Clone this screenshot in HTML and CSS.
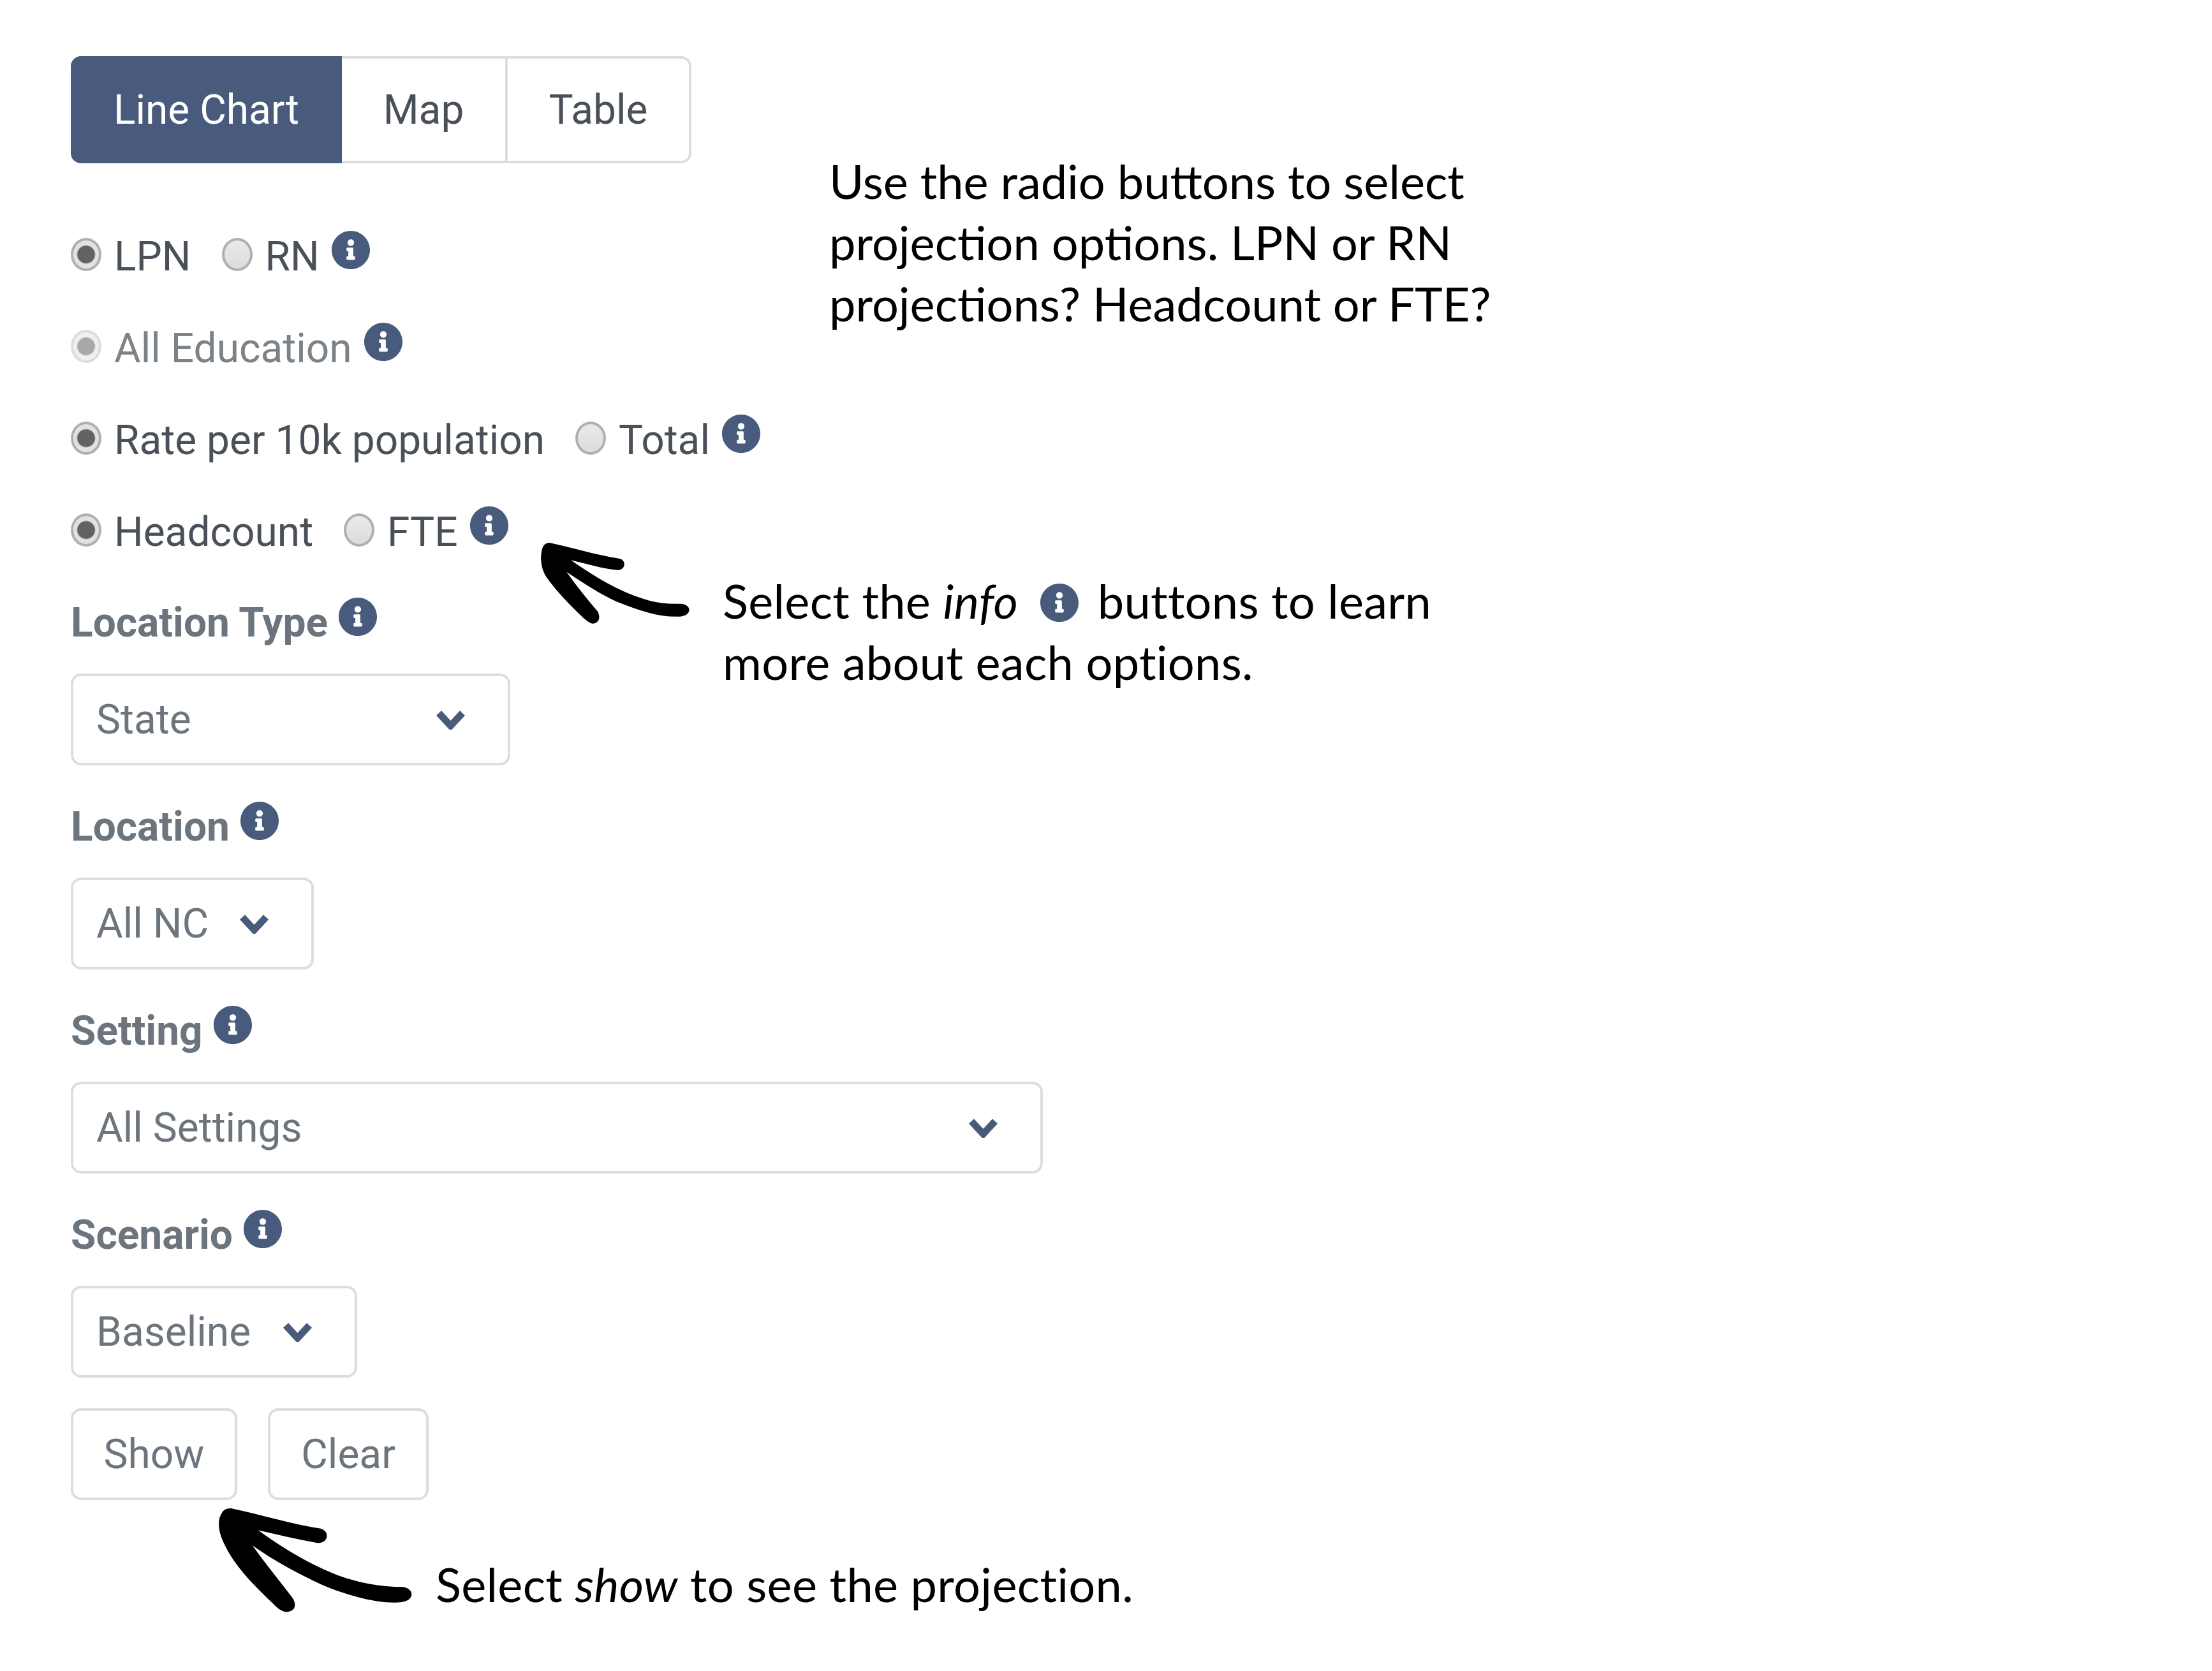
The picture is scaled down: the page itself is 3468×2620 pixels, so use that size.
FILE: index.html

```html
<!DOCTYPE html>
<html lang="en">
<head>
  <meta charset="UTF-8">
  <title>Projection options</title>
  <link rel="stylesheet" href="styles.css">
</head>
<body>
  <svg class="sprites" width="0" height="0">
    <symbol id="info" viewBox="0 0 512 512">
      <path d="M256 8C119.043 8 8 119.083 8 256c0 136.997 111.043 248 248 248s248-111.003 248-248C504 119.083 392.957 8 256 8zm0 110c23.196 0 42 18.804 42 42s-18.804 42-42 42-42-18.804-42-42 18.804-42 42-42zm56 254c0 6.627-5.373 12-12 12h-88c-6.627 0-12-5.373-12-12v-24c0-6.627 5.373-12 12-12h12v-64h-12c-6.627 0-12-5.373-12-12v-24c0-6.627 5.373-12 12-12h64c6.627 0 12 5.373 12 12v100h12c6.627 0 12 5.373 12 12v24z"/>
    </symbol>
    <symbol id="chevron" viewBox="0 0 47 31">
      <path d="M5 5 L23.5 25 L42 5" fill="none" stroke="currentColor" stroke-width="11"/>
    </symbol>
  </svg>

  <main class="page">
    <div class="tabs">
      <button class="tab tab-line active">Line Chart</button>
      <button class="tab tab-map">Map</button>
      <button class="tab tab-table">Table</button>
    </div>

    <form class="filters">
      <div class="radio-row">
        <label class="radio"><input type="radio" name="type" checked>LPN</label>
        <label class="radio"><input type="radio" name="type">RN</label>
        <svg class="info"><use href="#info"/></svg>
      </div>
      <div class="radio-row">
        <label class="radio disabled"><input type="radio" name="edu" checked disabled>All Education</label>
        <svg class="info"><use href="#info"/></svg>
      </div>
      <div class="radio-row">
        <label class="radio"><input type="radio" name="rate" checked>Rate per 10k population</label>
        <label class="radio"><input type="radio" name="rate">Total</label>
        <svg class="info"><use href="#info"/></svg>
      </div>
      <div class="radio-row">
        <label class="radio"><input type="radio" name="count" checked>Headcount</label>
        <label class="radio"><input type="radio" name="count">FTE</label>
        <svg class="info"><use href="#info"/></svg>
      </div>

      <div class="field-label">Location Type <svg class="info"><use href="#info"/></svg></div>
      <div class="select select-state">State <svg class="chevron"><use href="#chevron"/></svg></div>

      <div class="field-label">Location <svg class="info"><use href="#info"/></svg></div>
      <div class="select select-location">All NC <svg class="chevron"><use href="#chevron"/></svg></div>

      <div class="field-label">Setting <svg class="info"><use href="#info"/></svg></div>
      <div class="select select-setting">All Settings <svg class="chevron"><use href="#chevron"/></svg></div>

      <div class="field-label">Scenario <svg class="info"><use href="#info"/></svg></div>
      <div class="select select-scenario">Baseline <svg class="chevron"><use href="#chevron"/></svg></div>

      <div class="actions">
        <button type="button" class="btn btn-show">Show</button>
        <button type="button" class="btn btn-clear">Clear</button>
      </div>
    </form>

    <!-- callouts drawn over the form -->
    <p class="note note-radio">Use the radio buttons to select<br>projection options. LPN or RN<br>projections? Headcount or FTE?</p>
    <p class="note note-info">Select the <em>info</em> <svg class="info note-icon"><use href="#info"/></svg> buttons to learn<br>more about each options.</p>
    <p class="note note-show">Select <em>show</em> to see the projection.</p>

    <svg class="arrow arrow-info" viewBox="0 0 1500 720">
      <path d="M125 213 C230 235 340 270 455 288 C485 295 485 340 445 342 C370 335 300 312 225 295 C340 375 450 440 560 475 C620 495 680 503 745 500 C795 505 795 555 740 560 C640 565 540 530 440 490 C355 450 280 400 205 350 C250 415 300 475 350 535 C368 565 355 595 325 593 C310 590 300 580 285 568 C220 505 160 445 110 375 C85 335 80 290 88 250 C93 225 105 213 125 213 Z"/>
    </svg>
    <svg class="arrow arrow-show" viewBox="0 0 1568 1080" preserveAspectRatio="none">
      <path d="M610 555 C720 585 820 630 925 650 C960 665 950 725 910 717 C840 700 775 680 705 658 C790 740 880 815 985 870 C1060 905 1130 925 1215 925 C1255 935 1255 990 1205 997 C1120 1005 1010 960 930 915 C840 860 760 800 685 730 C730 815 780 895 825 975 C845 1015 830 1045 800 1042 C780 1035 770 1020 755 1000 C680 905 620 820 585 720 C565 665 560 610 578 575 C585 560 595 555 610 555 Z"/>
    </svg>
  </main>
</body>
</html>
```

FILE: styles.css

```css
* {
  box-sizing: border-box;
}

body {
  margin: 0;
  background: #fff;
  font-family: Roboto, "Liberation Sans", sans-serif;
  font-size: 64px;
  color: #495057;
}

.sprites {
  position: absolute;
}

.page {
  position: relative;
  min-height: 2620px;
  padding: 88px 0 0 111px;
}

/* tabs */
.tabs {
  display: flex;
  width: 973px;
  height: 168px;
  border: 4px solid #ddd;
  border-radius: 16px;
}

.tab {
  margin: 0;
  padding: 0;
  border: none;
  border-right: 4px solid #ddd;
  background: #fff;
  color: #495057;
  font: inherit;
}

.tab-line { width: 421px; }
.tab-map { width: 260px; }
.tab-table { flex: 1; border-right: none; border-radius: 0 12px 12px 0; }

.tab.active {
  margin: -4px 0 -4px -4px;
  width: 425px;
  border: none;
  border-radius: 16px 0 0 16px;
  background: #485b7c;
  color: #fff;
}

/* form */
.filters {
  margin-top: 99px;
}

.info {
  width: 62px;
  height: 62px;
  fill: #485b7c;
  vertical-align: baseline;
}

.radio-row {
  display: flex;
  align-items: baseline;
  height: 96px;
  line-height: 96px;
  margin-bottom: 48px;
}

.radio-row .info {
  margin-left: 18px;
  align-self: flex-end;
  margin-bottom: 28px;
}

.radio {
  display: flex;
  align-items: baseline;
  margin-right: 48px;
}

.radio-row .radio:has(+ .info) {
  margin-right: 0;
}

.radio.disabled {
  color: #7b8288;
}

.radio input {
  appearance: none;
  flex: none;
  width: 48px;
  height: 52px;
  margin: 0 20px 8px 0;
  border: 4px solid #b0b0b0;
  border-radius: 50%;
  background: linear-gradient(#eaeaea, #dcdcdc);
  align-self: center;
}

.radio input:checked {
  background: radial-gradient(circle, #626262 0 13px, #e2e2e2 15px);
}

.radio input:disabled {
  border-color: #ddd;
  background: radial-gradient(circle, #a8a8a8 0 13px, #efefef 15px);
}

.field-label {
  height: 96px;
  line-height: 96px;
  margin-bottom: 31px;
  font-weight: 700;
  color: #6c757d;
  white-space: nowrap;
}

.radio-row + .field-label {
  margin-top: -2px;
}

.select {
  display: flex;
  align-items: center;
  justify-content: space-between;
  height: 144px;
  margin-bottom: 49px;
  padding: 0 66px 0 36px;
  border: 4px solid #ddd;
  border-radius: 16px;
  background: #fff;
  color: #6c757d;
}

.select-state { width: 689px; }
.select-location { width: 381px; }
.select-setting { width: 1524px; }
.select-scenario { width: 449px; }

.chevron {
  width: 47px;
  height: 31px;
  color: #485b7c;
}

.actions {
  display: flex;
  gap: 48px;
  margin-top: -1px;
}

.btn {
  height: 144px;
  padding: 0;
  border: 4px solid #ddd;
  border-radius: 16px;
  background: #fff;
  color: #6c757d;
  font: inherit;
}

.btn-show { width: 261px; }
.btn-clear { width: 252px; }

/* callouts */
.note {
  position: absolute;
  margin: 0;
  font-family: Lato, "Open Sans", sans-serif;
  font-size: 74px;
  line-height: 96px;
  color: #000;
  white-space: nowrap;
}

.note-radio { left: 1300px; top: 236px; }
.note-info { left: 1133px; top: 894px; letter-spacing: 0.3px; }
.note-show { left: 683px; top: 2436px; letter-spacing: 0.3px; }

.note-icon {
  margin: 0 10px 0 14px;
  vertical-align: -6px;
}

.arrow {
  position: absolute;
  fill: #000;
}

.arrow-info { left: 820px; top: 780px; width: 500px; height: 240px; }
.arrow-show { left: 90px; top: 2180px; width: 700px; height: 360px; }
```
